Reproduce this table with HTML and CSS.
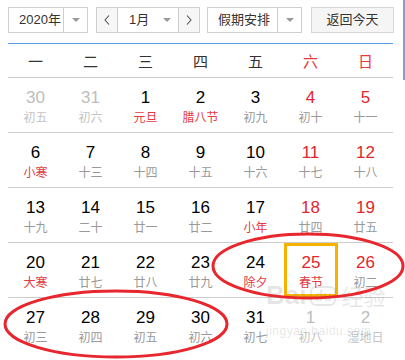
FILE: index.html
```html
<!DOCTYPE html>
<html lang="zh">
<head>
<meta charset="utf-8">
<link rel="stylesheet" href="styles.css">
</head>
<body>
<div class="page">
  <div class="toolbar">
    <div class="box year">
      <span class="label">2020年</span>
      <span class="drop"><i class="tri"></i></span>
    </div>
    <div class="box month">
      <span class="nav"><svg width="6" height="10" viewBox="0 0 6 10"><polyline points="5,0.5 1,5 5,9.5" fill="none" stroke="#555" stroke-width="1.1"/></svg></span>
      <span class="mid"><span class="mlabel">1月</span><i class="tri"></i></span>
      <span class="nav"><svg width="6" height="10" viewBox="0 0 6 10"><polyline points="1,0.5 5,5 1,9.5" fill="none" stroke="#555" stroke-width="1.1"/></svg></span>
    </div>
    <div class="box holiday">
      <span class="label">假期安排</span>
      <span class="drop"><i class="tri"></i></span>
    </div>
    <div class="btn">返回今天</div>
  </div>

  <div class="cal">
    <div class="week">
      <span>一</span><span>二</span><span>三</span><span>四</span><span>五</span><span class="we">六</span><span class="we">日</span>
    </div>
    <div class="grid">
      <div class="cell other"><b>30</b><em>初五</em></div>
      <div class="cell other"><b>31</b><em>初六</em></div>
      <div class="cell fest"><b>1</b><em>元旦</em></div>
      <div class="cell fest"><b>2</b><em>腊八节</em></div>
      <div class="cell"><b>3</b><em>初九</em></div>
      <div class="cell wkd"><b>4</b><em>初十</em></div>
      <div class="cell wkd"><b>5</b><em>十一</em></div>

      <div class="cell fest"><b>6</b><em>小寒</em></div>
      <div class="cell"><b>7</b><em>十三</em></div>
      <div class="cell"><b>8</b><em>十四</em></div>
      <div class="cell"><b>9</b><em>十五</em></div>
      <div class="cell"><b>10</b><em>十六</em></div>
      <div class="cell wkd"><b>11</b><em>十七</em></div>
      <div class="cell wkd"><b>12</b><em>十八</em></div>

      <div class="cell"><b>13</b><em>十九</em></div>
      <div class="cell"><b>14</b><em>二十</em></div>
      <div class="cell"><b>15</b><em>廿一</em></div>
      <div class="cell"><b>16</b><em>廿二</em></div>
      <div class="cell fest"><b>17</b><em>小年</em></div>
      <div class="cell wkd"><b>18</b><em>廿四</em></div>
      <div class="cell wkd"><b>19</b><em>廿五</em></div>

      <div class="cell fest"><b>20</b><em>大寒</em></div>
      <div class="cell"><b>21</b><em>廿七</em></div>
      <div class="cell"><b>22</b><em>廿八</em></div>
      <div class="cell"><b>23</b><em>廿九</em></div>
      <div class="cell fest"><b>24</b><em>除夕</em></div>
      <div class="cell wkd fest today"><b>25</b><em>春节</em></div>
      <div class="cell wkd"><b>26</b><em>初二</em></div>

      <div class="cell last"><b>27</b><em>初三</em></div>
      <div class="cell last"><b>28</b><em>初四</em></div>
      <div class="cell last"><b>29</b><em>初五</em></div>
      <div class="cell last"><b>30</b><em>初六</em></div>
      <div class="cell last"><b>31</b><em>初七</em></div>
      <div class="cell last other"><b>1</b><em>初八</em></div>
      <div class="cell last other"><b>2</b><em>湿地日</em></div>
    </div>
  </div>

  <div class="watermark">
    <div class="wm-top"><span class="wm-bai">Bai</span><span class="wm-du">du</span><span class="wm-jy">经验</span></div>
    <div class="wm-url">jingyan.baidu.com</div>
  </div>

  <svg class="marks" width="405" height="360" viewBox="0 0 405 360">
    <ellipse cx="308" cy="266" rx="95" ry="32" fill="none" stroke="#e8262d" stroke-width="3"/>
    <ellipse cx="116" cy="324" rx="111" ry="33" fill="none" stroke="#e8262d" stroke-width="3"/>
  </svg>
  <div class="edge"></div>
</div>
</body>
</html>
```

FILE: styles.css
```css
html, body {
  margin: 0;
  padding: 0;
  background: #fff;
}
.page {
  position: relative;
  width: 405px;
  height: 360px;
  overflow: hidden;
  padding: 7px 0 0 8px;
  box-sizing: border-box;
  font-family: "Liberation Sans", "Noto Sans CJK SC", sans-serif;
  color: #333;
}
.toolbar {
  display: flex;
  height: 26px;
  margin-bottom: 10px;
}
.box {
  display: flex;
  height: 26px;
  box-sizing: border-box;
  border: 1px solid #cfcfcf;
  font-size: 13px;
  line-height: 24px;
  color: #333;
}
.year { width: 80px; margin-right: 8px; }
.month { width: 104px; margin-right: 7px; }
.holiday { width: 95px; margin-right: 9px; }
.year .label { width: 54px; padding-left: 10px; box-sizing: border-box; }
.holiday .label { width: 69px; padding-left: 10px; box-sizing: border-box; }
.drop {
  width: 23px;
  border-left: 1px solid #cfcfcf;
  display: flex;
  align-items: center;
  justify-content: center;
}
.tri {
  display: block;
  width: 0;
  height: 0;
  border-left: 4px solid transparent;
  border-right: 4px solid transparent;
  border-top: 4px solid #9a9a9a;
}
.nav {
  width: 20px;
  background: #f6f6f6;
  display: flex;
  align-items: center;
  justify-content: center;
}
.nav:first-child { border-right: 1px solid #cfcfcf; }
.nav:last-child { border-left: 1px solid #cfcfcf; }
.mid {
  width: 60px;
  display: flex;
  align-items: center;
  padding-left: 11px;
  box-sizing: border-box;
}
.mid .mlabel { width: 34px; }
.btn {
  width: 83px;
  height: 26px;
  box-sizing: border-box;
  border: 1px solid #d6d6d6;
  background: #f5f5f5;
  font-size: 13px;
  line-height: 24px;
  text-align: center;
  color: #333;
}
.cal {
  width: 385px;
}
.week {
  display: grid;
  grid-template-columns: repeat(7, 55px);
  height: 33px;
  border-top: 1px solid #5b9ee6;
  border-bottom: 1px solid #cccccc;
  font-family: "Noto Sans CJK SC", sans-serif;
  font-size: 15px;
  line-height: 33px;
  text-align: center;
  color: #333;
}
.week .we { color: #e8373d; }
.grid {
  display: grid;
  grid-template-columns: repeat(7, 55px);
}
.cell {
  height: 55px;
  box-sizing: border-box;
  border-bottom: 1px solid #cccccc;
  padding-top: 10px;
  display: flex;
  flex-direction: column;
  align-items: center;
}
.cell.last { border-bottom: none; }
.cell b {
  font-weight: normal;
  font-size: 17px;
  line-height: 20px;
  color: #000;
}
.cell em {
  font-style: normal;
  font-family: "Noto Sans CJK SC", sans-serif;
  font-size: 12px;
  line-height: 18px;
  color: #999;
}
.cell.wkd b { color: #e2262c; }
.cell.fest em { color: #e23a3f; }
.cell.other b { color: #bdbdbd; }
.cell.other em { color: #c4c4c4; }
.cell.today {
  box-shadow: inset 0 0 0 3px #f7b200;
  margin-left: 1px;
}
.watermark {
  position: absolute;
  left: 266px;
  top: 276px;
  width: 130px;
  color: rgba(140, 140, 140, 0.22);
  pointer-events: none;
}
.wm-top {
  display: flex;
  align-items: flex-end;
  height: 34px;
}
.wm-bai {
  font-family: "Liberation Sans", sans-serif;
  font-weight: bold;
  font-size: 26px;
  line-height: 30px;
}
.wm-du {
  font-family: "Liberation Sans", sans-serif;
  font-weight: bold;
  font-size: 14px;
  line-height: 16px;
  border: 2px solid rgba(140, 140, 140, 0.22);
  border-radius: 6px;
  padding: 0 2px;
  margin: 0 6px 4px 4px;
}
.wm-jy {
  font-family: "Noto Sans CJK SC", sans-serif;
  font-size: 22px;
  line-height: 30px;
}
.wm-url {
  font-family: "Liberation Sans", sans-serif;
  font-size: 12px;
  line-height: 18px;
  margin-top: 12px;
  letter-spacing: 0.5px;
}
.marks {
  position: absolute;
  left: 0;
  top: 0;
  pointer-events: none;
}
.edge {
  position: absolute;
  left: 403px;
  top: 0;
  width: 2px;
  height: 80px;
  background: #6aa6ea;
}
```
